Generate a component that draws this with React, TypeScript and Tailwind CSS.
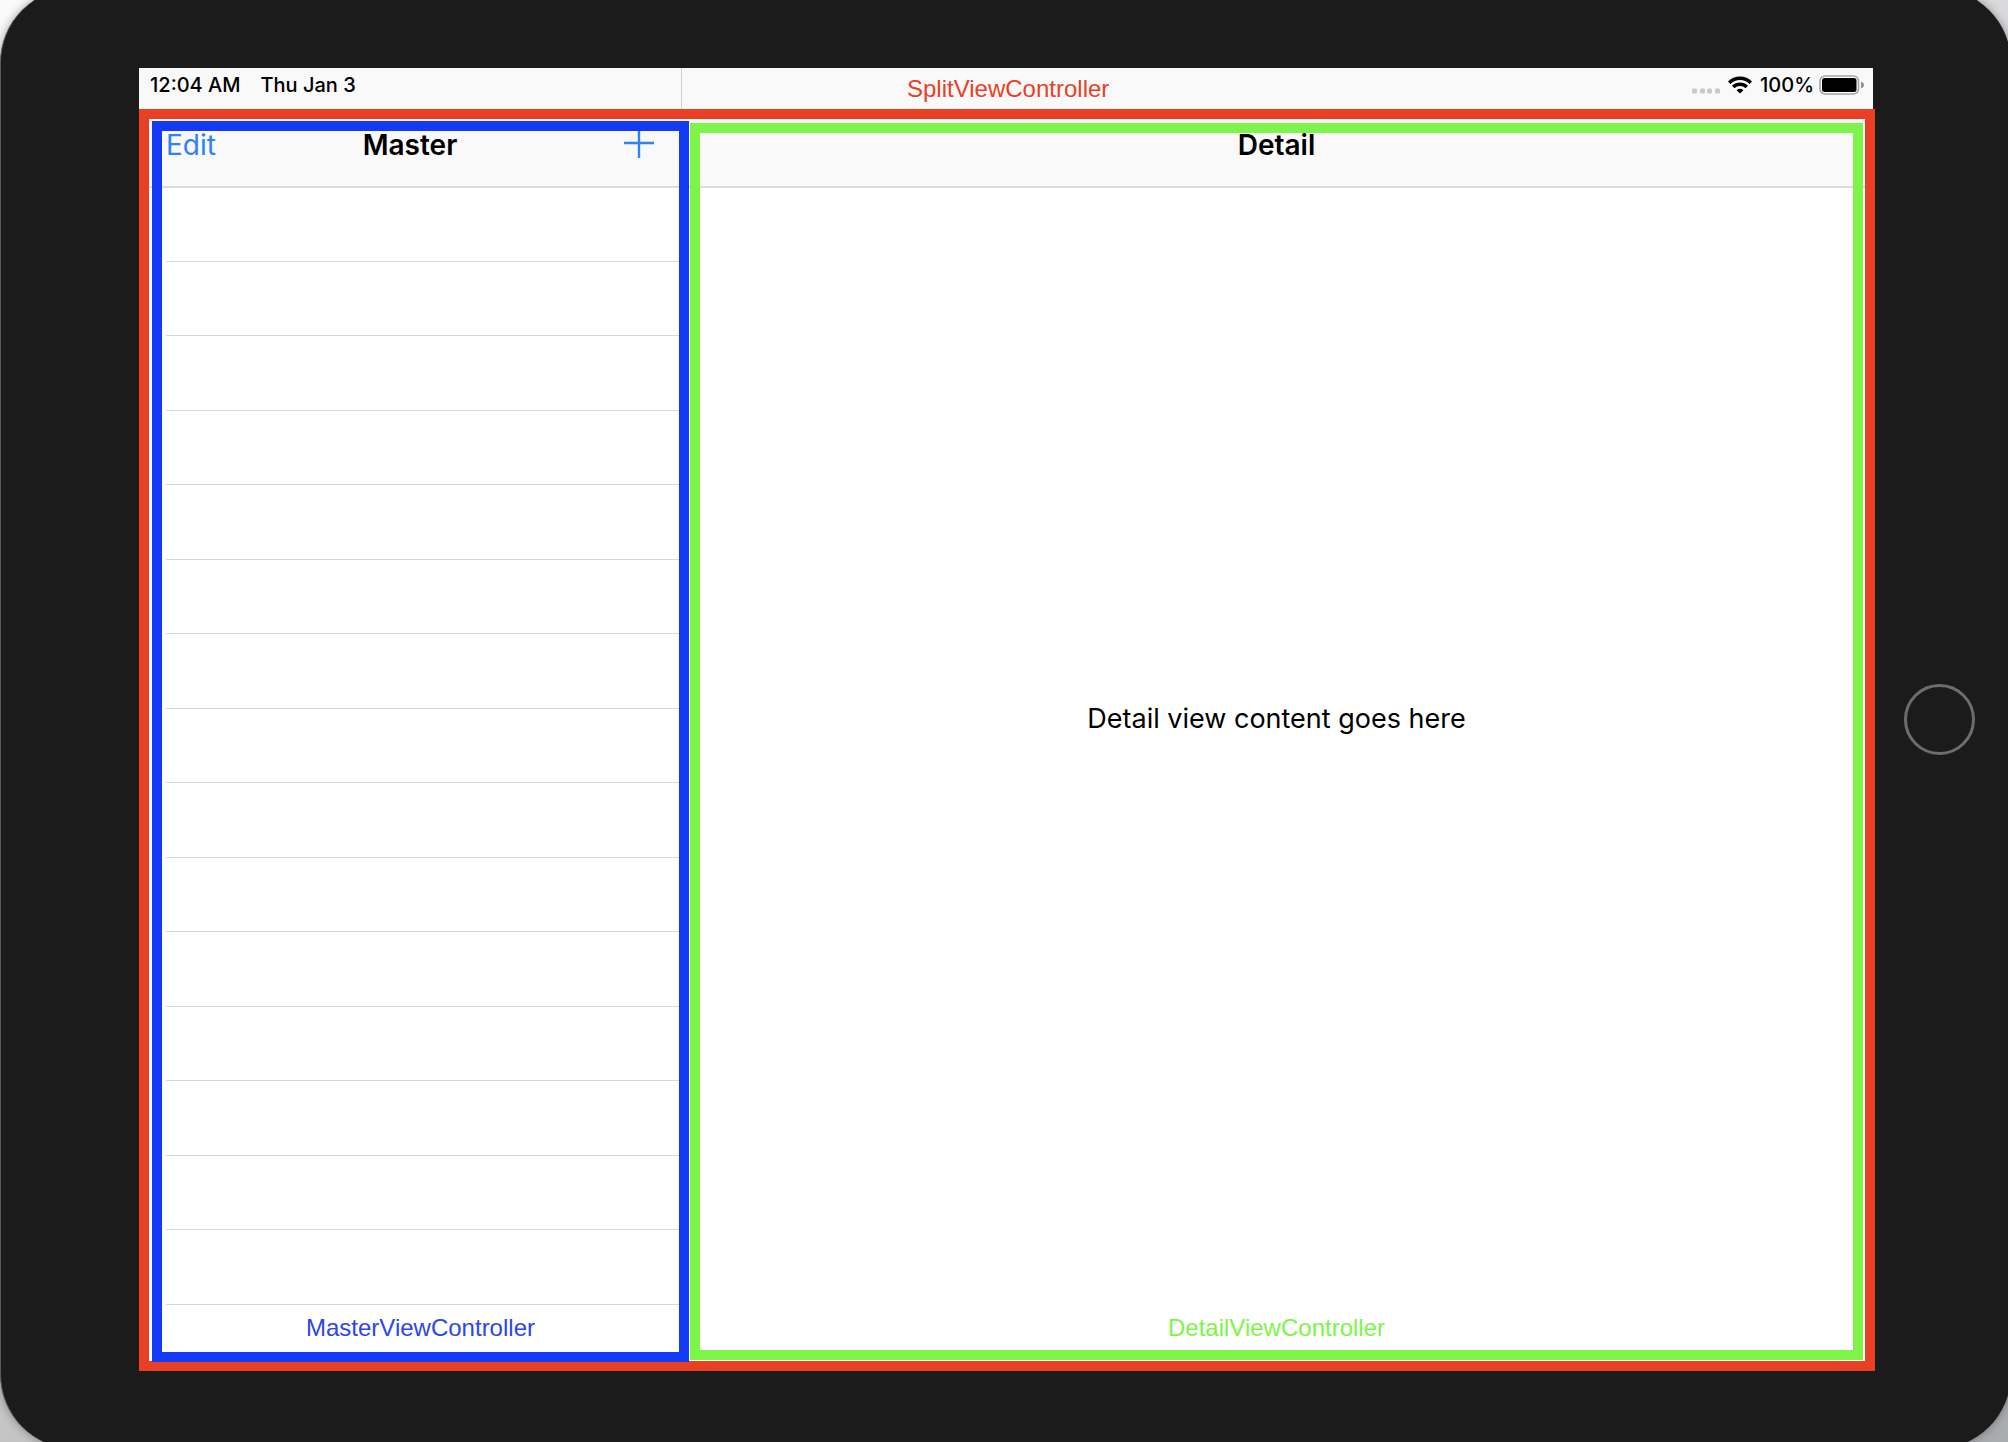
import React from "react";

const rows = Array.from({ length: 15 }, (_, i) => i);

function WifiIcon() {
  return (
    <svg viewBox="0 0 24 18" className="h-[18px] w-6" aria-label="Wi-Fi" role="img">
      <g fill="none" stroke="#000" strokeWidth="3.4">
        <path d="M1.2 6.8C7.2 0.8 16.8 0.8 22.8 6.8" />
        <path d="M5.2 11C9 7.3 15 7.3 18.8 11" />
      </g>
      <path d="M8.6 14.2C10.6 12.4 13.4 12.4 15.4 14.2L12 17.6Z" fill="#000" />
    </svg>
  );
}

function BatteryIcon() {
  return (
    <svg viewBox="0 0 46 20" className="h-5 w-[46px]" aria-label="Battery full" role="img">
      <rect x="1" y="1" width="38.5" height="18" rx="5" fill="#fff" stroke="#a3a3a3" strokeWidth="1.6" />
      <rect x="3" y="3" width="34.5" height="14" rx="2.5" fill="#000" />
      <path d="M42 6.5C44 7.5 45 8.6 45 10C45 11.4 44 12.5 42 13.5Z" fill="#8f8f8f" />
    </svg>
  );
}

function SignalDots() {
  return (
    <svg viewBox="0 0 29 6" className="mt-[11px] h-1.5 w-[29px]" aria-hidden="true">
      {[0, 8, 15, 23].map((x) => (
        <rect key={x} x={x} y="0.5" width="5" height="5" rx="1.5" fill="#c9c9c9" />
      ))}
    </svg>
  );
}

function StatusBar() {
  return (
    <div className="mr-[2px] grid h-[41px] grid-cols-[543px_1fr] bg-[#f9f9f9] text-[20px] leading-[24px] font-medium">
      <div className="flex items-start gap-5 border-r border-[#cfcfcf] pt-[5px] pl-[11px]">
        <span>12:04 AM</span>
        <span>Thu Jan 3</span>
      </div>
      <div className="flex items-start justify-between pr-2 pl-[225px]">
        <span className="pt-[7px] font-['Liberation_Sans',Arial,sans-serif] text-[24px] leading-[28px] font-normal text-[#e83f25]">
          SplitViewController
        </span>
        <div className="flex items-center pt-[5px]">
          <SignalDots />
          <span className="ml-[7px]">
            <WifiIcon />
          </span>
          <span className="mr-[5px] ml-2">100%</span>
          <BatteryIcon />
        </div>
      </div>
    </div>
  );
}

function MasterPanel() {
  return (
    <section className="-mb-[2px] flex min-h-[600px] flex-col border-[10px] border-[#133af5] bg-white">
      <header className="grid h-[57px] grid-cols-[1fr_auto_1fr] items-start border-b-2 border-[#dcdcdc] bg-[#f9f9f9] pr-[25px] pl-[4px] text-[28px] leading-[34px]">
        <button type="button" className="-mt-[3px] justify-self-start text-[#3080f8]">
          Edit
        </button>
        <h1 className="-mt-[3px] font-semibold">Master</h1>
        <button type="button" aria-label="Add" className="justify-self-end text-[#3080f8]">
          <svg viewBox="0 0 30 27" className="h-[27px] w-[30px]" fill="none" stroke="currentColor" strokeWidth="2.4">
            <path d="M0 12H30M15 0V27" />
          </svg>
        </button>
      </header>
      <ul className="-mt-px flex flex-1 flex-col pl-[4px]">
        {rows.map((r) => (
          <li key={r} className="flex-1 border-b border-[#d8d8d8]" />
        ))}
      </ul>
      <footer className="h-[47px] pt-[9px] text-center font-['Liberation_Sans',Arial,sans-serif] text-[24px] leading-[28px] text-[#2a46f0]">
        MasterViewController
      </footer>
    </section>
  );
}

function DetailPanel() {
  return (
    <section className="mt-[2px] flex min-h-[600px] flex-col border-[10px] border-[#7df548] bg-white">
      <header className="h-[55px] border-b-2 border-[#dcdcdc] bg-[#f9f9f9] text-center text-[28px] leading-[34px]">
        <h2 className="-mt-[5px] font-semibold">Detail</h2>
      </header>
      <div className="flex flex-1 items-center justify-center pb-14 text-[27px] leading-[34px]">
        <p>Detail view content goes here</p>
      </div>
      <footer className="h-[45px] pt-[9px] text-center font-['Liberation_Sans',Arial,sans-serif] text-[24px] leading-[28px] text-[#7df548]">
        DetailViewController
      </footer>
    </section>
  );
}

export default function App() {
  return (
    <main className="flex min-h-screen overflow-hidden bg-[conic-gradient(#e8e8e8,#dadadd_54deg,#a9abad_126deg,#c4c4c4_234deg,#fafafa_306deg,#e8e8e8)] font-[Inter,sans-serif] text-black">
      <div className="-mt-[12px] -mr-[3px] -mb-[7px] grid flex-1 grid-cols-[1fr_136px] rounded-[75px] border-l border-[#5a5a5a] bg-[#1b1b1b] pt-[80px] pb-[78px] pl-[138px] shadow-[0_0_10px_rgba(0,0,0,0.35)]">
        <div className="flex flex-col">
          <StatusBar />
          <div className="grid flex-1 grid-cols-[537fr_1173fr] gap-px border-[10px] border-[#e83f25] bg-[linear-gradient(#f9f9f9_67px,#dcdcdc_67px,#dcdcdc_69px,#fff_69px)] pt-[2px] pr-[2px] pb-px pl-[3px]">
            <MasterPanel />
            <DetailPanel />
          </div>
        </div>
        <div className="flex items-center justify-center pr-2">
          <button type="button" aria-label="Home" className="size-[71px] rounded-full border-[3px] border-[#6d6d6d]" />
        </div>
      </div>
    </main>
  );
}
